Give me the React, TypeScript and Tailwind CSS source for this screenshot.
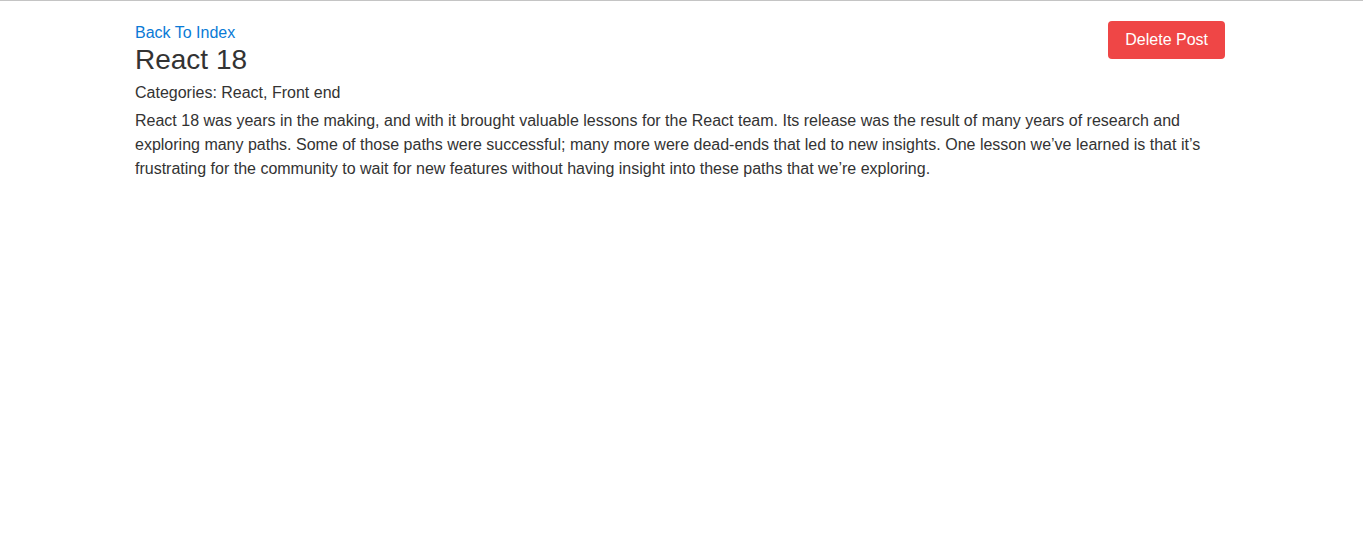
export default function App() {
  return (
    <div className="min-h-[533px] bg-white border-t border-[#c4c4c4] font-['Liberation_Sans',Arial,sans-serif] text-[#333333]">
      <div className="mx-auto w-[1093px] pr-[3px] pt-[20px]">
        <div className="flex justify-between items-start">
          <div>
            <a href="#" className="block text-[16px] leading-[24px] text-[#0a7ad6]">
              Back To Index
            </a>
            <h1 className="text-[28px] leading-[30px] font-normal">React 18</h1>
            <p className="mt-[6px] text-[16px] leading-[24px]">Categories: React, Front end</p>
          </div>
          <button className="h-[38px] px-[17px] rounded-[4px] bg-[#ef4646] text-white text-[16px] leading-[24px]">
            Delete Post
          </button>
        </div>
        <p className="mt-[4px] text-[16px] leading-[24px]">
          React 18 was years in the making, and with it brought valuable lessons for the React team. Its release was the result of many years of research and exploring many paths. Some of those paths were successful; many more were dead-ends that led to new insights. One lesson we’ve learned is that it’s frustrating for the community to wait for new features without having insight into these paths that we’re exploring.
        </p>
      </div>
    </div>
  );
}
